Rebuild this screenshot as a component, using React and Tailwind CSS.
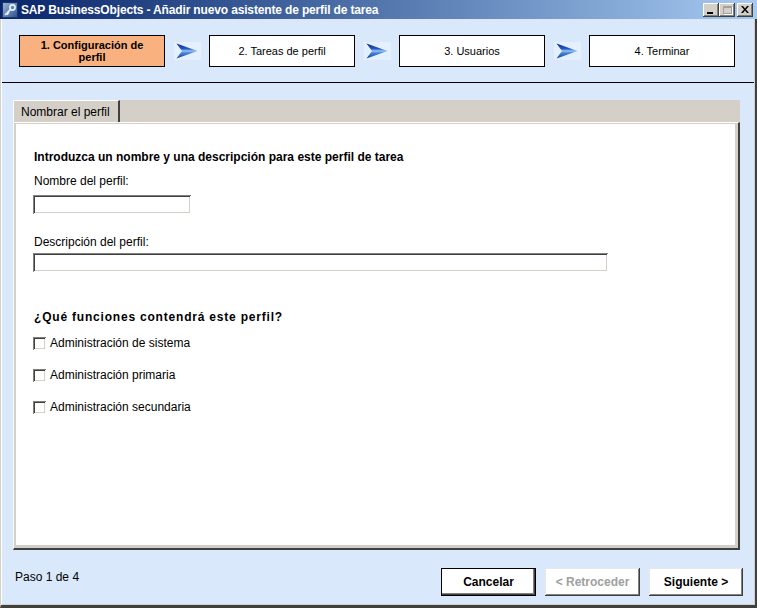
import { useState } from 'react'

const STEPS = [
  { n: 1, label: '1. Configuración de perfil', active: true },
  { n: 2, label: '2. Tareas de perfil' },
  { n: 3, label: '3. Usuarios' },
  { n: 4, label: '4. Terminar' },
]

const ROLES = [
  'Administración de sistema',
  'Administración primaria',
  'Administración secundaria',
]

function AppIcon() {
  return (
    <svg width="16" height="16" viewBox="0 0 16 16">
      <defs>
        <linearGradient id="ic" x1="0" y1="0" x2="1" y2="1">
          <stop offset="0" stopColor="#9db7dc" />
          <stop offset="1" stopColor="#2d4f8e" />
        </linearGradient>
      </defs>
      <rect x="0.5" y="0.5" width="15" height="15" fill="url(#ic)" stroke="#1d3566" />
      <circle cx="10.5" cy="5.5" r="2.6" fill="none" stroke="#e8f1ff" strokeWidth="1.6" />
      <path d="M8.6 7.4 L3 13 M4.6 11.4 L6 12.8 M5.8 10.2 L7 11.4" stroke="#e8f1ff" strokeWidth="1.6" fill="none" />
    </svg>
  )
}

function WinButton({ children }) {
  return (
    <div className="w-[16px] h-[14px] bg-[#d4d0c8] flex items-center justify-center shadow-[inset_-1px_-1px_0_#404040,inset_1px_1px_0_#ffffff,inset_-2px_-2px_0_#808080]">
      {children}
    </div>
  )
}

function StepArrow() {
  return (
    <div className="w-[44px] flex justify-center">
      <div className="w-[27px] h-[18px] bg-[#e4f0fd] flex items-center justify-center">
        <svg width="22" height="16" viewBox="0 0 22 16">
          <defs>
            <linearGradient id="arw" x1="0" y1="0" x2="0" y2="1">
              <stop offset="0" stopColor="#0a2888" />
              <stop offset="0.35" stopColor="#2458c0" />
              <stop offset="0.5" stopColor="#9cc6f6" />
              <stop offset="0.62" stopColor="#4a88dc" />
              <stop offset="1" stopColor="#0f3aa0" />
            </linearGradient>
          </defs>
          <path d="M0.5 0.5 L21.5 8 L0.5 15.5 L6 8 Z" fill="url(#arw)" />
        </svg>
      </div>
    </div>
  )
}

function Checkbox({ checked, onChange }) {
  return (
    <button
      onClick={onChange}
      className="w-[13px] h-[13px] bg-white flex items-center justify-center shadow-[inset_1px_1px_0_#808080,inset_-1px_-1px_0_#ffffff,inset_2px_2px_0_#404040,inset_-2px_-2px_0_#d4d0c8]"
    >
      {checked && (
        <svg width="7" height="7" viewBox="0 0 7 7">
          <path d="M0 3 L2 5 L7 0 L7 2 L2 7 L0 5 Z" fill="#000" />
        </svg>
      )}
    </button>
  )
}

export default function App() {
  const [name, setName] = useState('')
  const [desc, setDesc] = useState('')
  const [roles, setRoles] = useState({})

  return (
    <div className="w-[757px] h-[608px] flex flex-col bg-[#dae8fc] font-['Liberation_Sans',Arial,sans-serif] text-black overflow-hidden">
      {/* Title bar */}
      <div className="h-[19px] shrink-0 flex items-center bg-gradient-to-r from-[#0a246a] to-[#a6caf0] pl-[2px] pr-[4px]">
        <AppIcon />
        <span className="ml-[3px] text-[12px] font-bold text-white leading-none tracking-[-0.15px]">
          SAP BusinessObjects - Añadir nuevo asistente de perfil de tarea
        </span>
        <div className="ml-auto flex items-center">
          <WinButton>
            <div className="w-[6px] h-[2px] bg-black mt-[6px] -ml-[2px]" />
          </WinButton>
          <WinButton>
            <div className="w-[9px] h-[8px] border border-[#a0a0a0] border-t-2 shadow-[1px_1px_0_#ffffff]" />
          </WinButton>
          <div className="w-[2px]" />
          <WinButton>
            <svg width="8" height="7" viewBox="0 0 8 7">
              <path d="M0 0 L2 0 L4 2.5 L6 0 L8 0 L5 3.5 L8 7 L6 7 L4 4.5 L2 7 L0 7 L3 3.5 Z" fill="#000" />
            </svg>
          </WinButton>
        </div>
      </div>

      {/* Body */}
      <div className="flex-1 flex flex-col border-l border-l-[#d4d0c8] border-r-2 border-r-[#404040] border-b-[3px] border-b-[#404040]">
        <div className="flex-1 flex flex-col border-l border-l-white border-r border-r-[#d4d0c8] border-b border-b-[#d4d0c8]">
          {/* Steps */}
          <div className="flex items-center pl-[17px] pt-[16px]">
            {STEPS.map((s, i) => (
              <div key={s.n} className="flex items-center">
                {i > 0 && <StepArrow />}
                <div
                  className={`w-[146px] h-[32px] border border-black flex items-center justify-center text-center text-[11px] leading-[12px] ${
                    s.active ? 'bg-[#f9b27f] font-bold px-[14px]' : 'bg-white'
                  }`}
                >
                  {s.label}
                </div>
              </div>
            ))}
          </div>
          <div className="mt-[15px] h-px bg-black" />

          {/* Tab panel */}
          <div className="mt-[17px] ml-[11px] w-[727px] flex flex-col">
            <div className="h-[22px] bg-[#d4d0c8] flex">
              <div className="w-[107px] h-[22px] border-t border-l border-white border-r-2 border-r-[#404040] flex items-center pl-[7px] text-[12px]">
                Nombrar el perfil
              </div>
            </div>
            <div className="h-[428px] bg-[#d4d0c8] border-t border-l border-white border-r-2 border-b-2 border-r-[#404040] border-b-[#404040] pt-px pl-[2px] pr-[3px] pb-[3px]">
              <div className="h-full bg-white pl-[17px] pt-[26px] text-[12px]">
                <p className="pl-px font-bold text-[12px] leading-[14px]">
                  Introduzca un nombre y una descripción para este perfil de tarea
                </p>
                <p className="pl-px mt-[10px] leading-[14px]">Nombre del perfil:</p>
                <input
                  value={name}
                  onChange={e => setName(e.target.value)}
                  className="mt-[7px] block w-[158px] h-[19px] px-[3px] bg-white text-[12px] outline-none shadow-[inset_1px_1px_0_#808080,inset_-1px_-1px_0_#ffffff,inset_2px_2px_0_#404040,inset_-2px_-2px_0_#d4d0c8]"
                />
                <p className="pl-px mt-[21px] leading-[14px]">Descripción del perfil:</p>
                <input
                  value={desc}
                  onChange={e => setDesc(e.target.value)}
                  className="mt-[4px] block w-[575px] h-[19px] px-[3px] bg-white text-[12px] outline-none shadow-[inset_1px_1px_0_#808080,inset_-1px_-1px_0_#ffffff,inset_2px_2px_0_#404040,inset_-2px_-2px_0_#d4d0c8]"
                />
                <p className="pl-px mt-[38px] font-bold text-[12px] leading-[14px] tracking-[0.8px]">
                  ¿Qué funciones contendrá este perfil?
                </p>
                <div className="mt-[12px] flex flex-col gap-[18px]">
                  {ROLES.map(r => (
                    <label key={r} className="h-[14px] flex items-center gap-[4px] leading-[14px]">
                      <Checkbox
                        checked={!!roles[r]}
                        onChange={() => setRoles(v => ({ ...v, [r]: !v[r] }))}
                      />
                      <span>{r}</span>
                    </label>
                  ))}
                </div>
              </div>
            </div>
          </div>

          {/* Footer */}
          <div className="flex-1 flex items-start pl-[13px] pr-[11px]">
            <span className="mt-[20px] text-[12px] leading-[14px]">Paso 1 de 4</span>
            <div className="ml-auto mt-[18px] flex gap-[9px] text-[12px] font-bold">
              <button className="w-[95px] h-[28px] bg-white border border-black shadow-[inset_-1px_-1px_0_#404040,inset_-2px_-2px_0_#808080]">
                Cancelar
              </button>
              <button disabled className="w-[95px] h-[28px] bg-white text-[#a0a0a0] shadow-[inset_-1px_-1px_0_#404040,inset_1px_1px_0_#e8e8e8,inset_-2px_-2px_0_#808080]">
                &lt; Retroceder
              </button>
              <button className="w-[94px] h-[28px] bg-white shadow-[inset_-1px_-1px_0_#404040,inset_1px_1px_0_#e8e8e8,inset_-2px_-2px_0_#808080]">
                Siguiente &gt;
              </button>
            </div>
          </div>
        </div>
      </div>
    </div>
  )
}
